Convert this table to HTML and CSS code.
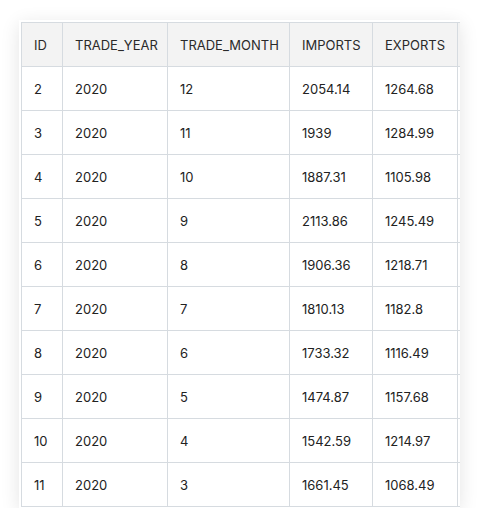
FILE: index.html
```html
<!DOCTYPE html>
<html lang="en">
<head>
    <meta charset="UTF-8">
    <meta name="viewport" content="width=device-width, initial-scale=1.0">
    <title>Trade data</title>
    <link rel="stylesheet" href="styles.css">
</head>
<body>
    <div class="table-card">
        <table class="data-table">
            <thead>
                <tr>
                    <th class="col-id">ID</th>
                    <th class="col-year">TRADE_YEAR</th>
                    <th class="col-month">TRADE_MONTH</th>
                    <th class="col-imp">IMPORTS</th>
                    <th class="col-exp">EXPORTS</th>
                    <th class="col-more"></th>
                </tr>
            </thead>
            <tbody>
                <tr><td>2</td><td>2020</td><td>12</td><td>2054.14</td><td>1264.68</td><td></td></tr>
                <tr><td>3</td><td>2020</td><td>11</td><td>1939</td><td>1284.99</td><td></td></tr>
                <tr><td>4</td><td>2020</td><td>10</td><td>1887.31</td><td>1105.98</td><td></td></tr>
                <tr><td>5</td><td>2020</td><td>9</td><td>2113.86</td><td>1245.49</td><td></td></tr>
                <tr><td>6</td><td>2020</td><td>8</td><td>1906.36</td><td>1218.71</td><td></td></tr>
                <tr><td>7</td><td>2020</td><td>7</td><td>1810.13</td><td>1182.8</td><td></td></tr>
                <tr><td>8</td><td>2020</td><td>6</td><td>1733.32</td><td>1116.49</td><td></td></tr>
                <tr><td>9</td><td>2020</td><td>5</td><td>1474.87</td><td>1157.68</td><td></td></tr>
                <tr><td>10</td><td>2020</td><td>4</td><td>1542.59</td><td>1214.97</td><td></td></tr>
                <tr><td>11</td><td>2020</td><td>3</td><td>1661.45</td><td>1068.49</td><td></td></tr>
            </tbody>
        </table>
    </div>
</body>
</html>
```

FILE: styles.css
```css
* {
    margin: 0;
    padding: 0;
    box-sizing: border-box;
}
body {
    background: #fff;
    padding: 20px 0 0 19px;
    font-family: Inter, 'Noto Sans', sans-serif;
}
.table-card {
    width: 441px;
    padding: 2px 0 1px 2px;
    background: #fff;
    overflow: hidden;
    box-shadow: 0 4px 18px rgba(0, 0, 0, 0.11);
}
.data-table {
    border-collapse: separate;
    border-spacing: 0;
    table-layout: fixed;
    width: 516px;
    border-top: 1px solid #d6dbe0;
    border-left: 1px solid #d6dbe0;
    font-size: 13px;
    color: #222;
}
.data-table th,
.data-table td {
    height: 44px;
    padding: 0 12px;
    text-align: left;
    vertical-align: middle;
    white-space: nowrap;
    border-right: 1px solid #d6dbe0;
    border-bottom: 1px solid #d6dbe0;
}
.data-table th {
    font-weight: 400;
    color: #2a2a2a;
    background: #f3f3f3;
}
.col-id { width: 41px; }
.col-year { width: 105px; }
.col-month { width: 122px; }
.col-imp { width: 83px; }
.col-exp { width: 85px; }
.col-more { width: 80px; }
```
